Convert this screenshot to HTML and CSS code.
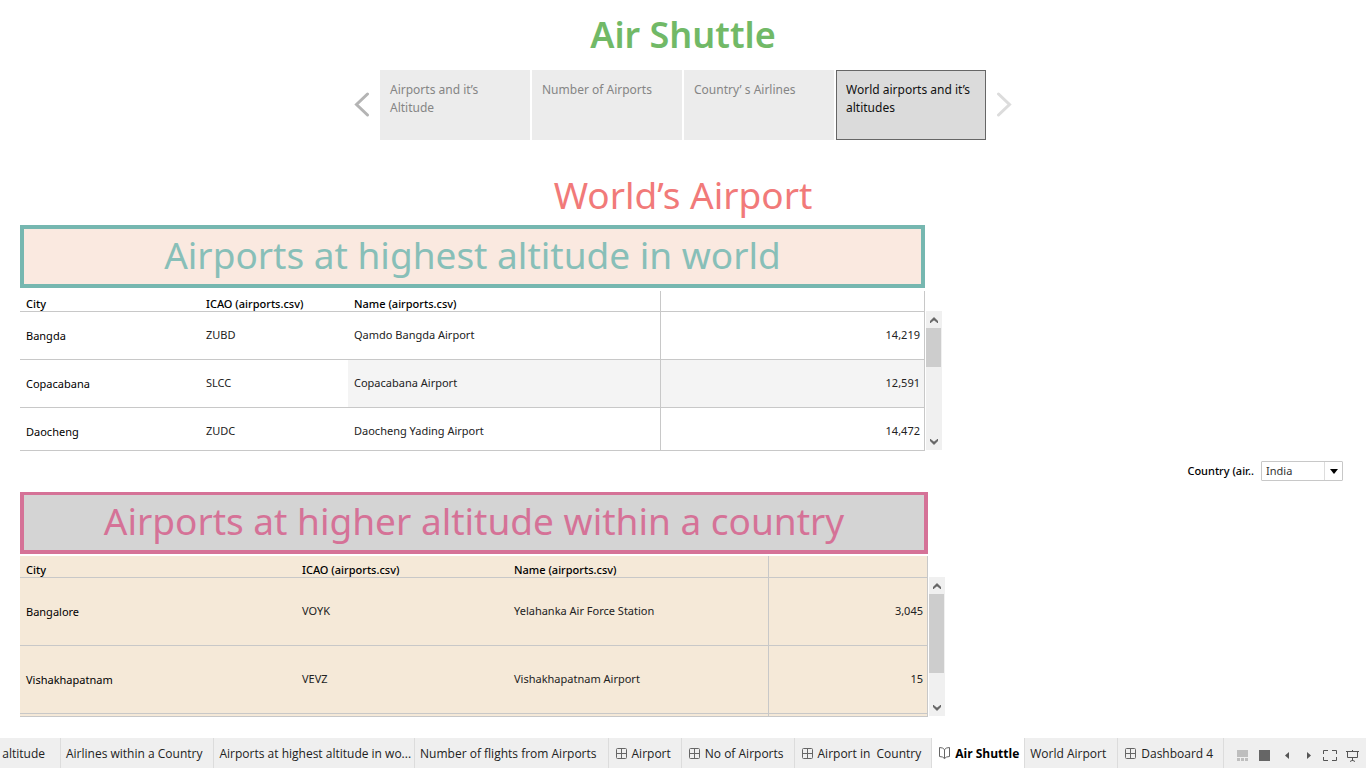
FILE: index.html
```html
<!DOCTYPE html>
<html lang="en">
<head>
<meta charset="utf-8">
<meta name="viewport" content="width=device-width, initial-scale=1">
<title>Air Shuttle</title>
<link rel="stylesheet" href="styles.css">
</head>
<body>
<svg class="defs" aria-hidden="true">
  <symbol id="grid" viewBox="0 0 11 11"><path d="M1.5.5h8a1 1 0 0 1 1 1v8a1 1 0 0 1-1 1h-8a1 1 0 0 1-1-1v-8a1 1 0 0 1 1-1zM5.5.5v10M.5 5.500h10" fill="none" stroke="#666"/></symbol>
  <symbol id="up" viewBox="0 0 8 6"><path d="M0 4.500 4 .500l4 4V6L4 2.800 0 6z" fill="#606060" stroke="#606060" stroke-width=".8"/></symbol>
  <symbol id="down" viewBox="0 0 8 6"><path d="M0 1.500 4 5.500l4-4V0L4 3.200 0 0z" fill="#606060" stroke="#606060" stroke-width=".8"/></symbol>
</svg>
<main class="story">
  <h1 class="story-title">Air Shuttle</h1>
  <nav class="points" aria-label="Story points">
    <button class="arrow" aria-label="Previous"><svg width="16" height="26" viewBox="0 0 16 26"><path d="M13.500 2 2.500 12.500l11 10.500" fill="none" stroke="#b4b4b4" stroke-width="3" stroke-linecap="round"/></svg></button>
    <div class="point-list">
      <button class="point">Airports and it’s Altitude</button>
      <button class="point">Number of Airports</button>
      <button class="point">Country’ s Airlines</button>
      <button class="point active">World airports and it’s altitudes</button>
    </div>
    <button class="arrow" aria-label="Next"><svg width="16" height="26" viewBox="0 0 16 26"><path d="M2.500 2l11 10.500L2.500 23" fill="none" stroke="#dcdcdc" stroke-width="3" stroke-linecap="round"/></svg></button>
  </nav>
  <h2 class="dash-title">World’s Airport</h2>
  <div class="dashboard">
    <div class="panels">
      <section class="panel world">
        <h3 class="panel-title">Airports at highest altitude in world</h3>
        <div class="sheet">
          <div class="view">
            <table>
              <colgroup><col class="city"><col class="icao"><col class="name"><col></colgroup>
              <thead><tr><th>City</th><th>ICAO (airports.csv)</th><th>Name (airports.csv)</th><td></td></tr></thead>
              <tbody>
                <tr><th>Bangda</th><td>ZUBD</td><td>Qamdo Bangda Airport</td><td>14,219</td></tr>
                <tr class="band"><th>Copacabana</th><td>SLCC</td><td>Copacabana Airport</td><td>12,591</td></tr>
                <tr><th>Daocheng</th><td>ZUDC</td><td>Daocheng Yading Airport</td><td>14,472</td></tr>
              </tbody>
            </table>
          </div>
          <div class="scrollbar">
            <button aria-label="Scroll up"><svg width="8" height="6"><use href="#up"/></svg></button>
            <div class="track"><div class="thumb"></div></div>
            <button aria-label="Scroll down"><svg width="8" height="6"><use href="#down"/></svg></button>
          </div>
        </div>
      </section>
      <section class="panel country">
        <h3 class="panel-title">Airports at higher altitude within a country</h3>
        <div class="sheet">
          <div class="view">
            <table>
              <colgroup><col class="city"><col class="icao"><col class="name"><col></colgroup>
              <thead><tr><th>City</th><th>ICAO (airports.csv)</th><th>Name (airports.csv)</th><td></td></tr></thead>
              <tbody>
                <tr><th>Bangalore</th><td>VOYK</td><td>Yelahanka Air Force Station</td><td>3,045</td></tr>
                <tr><th>Vishakhapatnam</th><td>VEVZ</td><td>Vishakhapatnam Airport</td><td>15</td></tr>
                <tr><th></th><td></td><td></td><td></td></tr>
              </tbody>
            </table>
          </div>
          <div class="scrollbar">
            <button aria-label="Scroll up"><svg width="8" height="6"><use href="#up"/></svg></button>
            <div class="track"><div class="thumb"></div></div>
            <button aria-label="Scroll down"><svg width="8" height="6"><use href="#down"/></svg></button>
          </div>
        </div>
      </section>
    </div>
    <aside class="filter">
      <label for="country">Country (air..</label>
      <div class="select-box">
        <select id="country"><option>India</option></select>
        <span class="caret"><svg width="8" height="5" viewBox="0 0 8 5"><path d="M0 0h8L4 5z"/></svg></span>
      </div>
    </aside>
  </div>
</main>
<footer class="tabbar">
  <nav class="tabs" aria-label="Sheets">
    <a class="tab first" href="#">t altitude</a>
    <a class="tab" href="#">Airlines within a Country</a>
    <a class="tab tight" href="#">Airports at highest altitude in wo...</a>
    <a class="tab" href="#">Number of flights from Airports</a>
    <a class="tab icon" href="#"><svg width="11" height="11"><use href="#grid"/></svg>Airport</a>
    <a class="tab icon" href="#"><svg width="11" height="11"><use href="#grid"/></svg>No of Airports</a>
    <a class="tab icon" href="#"><svg width="11" height="11"><use href="#grid"/></svg>Airport in&nbsp; Country</a>
    <a class="tab icon current" href="#"><svg width="11" height="12" viewBox="0 0 11 12"><path d="M5.500 2.500 3.500 1 .5.500v9l3 .5 2 1.500 2-1.500 3-.500v-9L7.500 1zM5.500 2.500v9" fill="none" stroke="#666"/></svg>Air Shuttle</a>
    <a class="tab" href="#">World Airport</a>
    <a class="tab icon" href="#"><svg width="11" height="11"><use href="#grid"/></svg>Dashboard 4</a>
  </nav>
  <div class="tools">
    <button aria-label="Show filmstrip"><svg width="11" height="11" viewBox="0 0 11 11"><path d="M0 0h11v7H0zM0 8h3v3H0zM4 8h3v3H4zM8 8h3v3H8z" fill="#bebebe"/></svg></button>
    <button aria-label="Show tabs"><svg width="11" height="11"><path d="M0 0h11v11H0z" fill="#666"/></svg></button>
    <button aria-label="Previous sheet"><svg width="5" height="7"><path d="M5 0v7L1 3.500z" fill="#555"/></svg></button>
    <button aria-label="Next sheet"><svg width="5" height="7"><path d="M1 0v7l4-3.500z" fill="#555"/></svg></button>
    <button aria-label="Full screen"><svg width="14" height="11" viewBox="0 0 14 11"><path d="M.5 4V.5H5M9 .5h4.500V4M13.500 7v3.500H9M5 10.500H.5V7" fill="none" stroke="#555"/></svg></button>
    <button aria-label="Presentation mode"><svg width="13" height="12" viewBox="0 0 13 12"><path d="M0 1.500h13M1.500 1.500v6h10v-6M6.500 0v1M6.500 7.500v3M4 11.500l2-1h1l2 1" fill="none" stroke="#555"/></svg></button>
  </div>
</footer>
</body>
</html>
```
FILE: styles.css
```css
* { box-sizing: border-box; }
body {
  margin: 0;
  min-height: 100vh;
  display: flex;
  flex-direction: column;
  background: #fff;
  color: #000;
  font-family: "Noto Sans", "Open Sans", sans-serif;
  font-size: 11px;
}
button, select { font: inherit; color: inherit; margin: 0; padding: 0; border: 0; background: none; }
.defs { position: absolute; width: 0; height: 0; }
h1, h2, h3 { margin: 0; text-align: center; font-size: 37px; line-height: 50px; font-weight: 400; }

.story { flex: 1; padding-top: 10px; }
.story-title { color: #71b967; font-size: 36px; font-weight: 600; }

.points { display: flex; justify-content: center; gap: 10px; margin-top: 10px; }
.point-list { display: flex; gap: 2px; }
.arrow { display: flex; align-items: center; }
.point {
  display: flex;
  width: 150px;
  height: 70px;
  padding: 11px 10px;
  background: #ececec;
  color: #858585;
  font-size: 12px;
  line-height: 18px;
  text-align: left;
}
.point.active { background: #dbdbdb; border: 1px solid #666; padding: 10px 9px; color: #111; }

.dash-title { margin-top: 30px; color: #f17a79; }

.dashboard { display: flex; padding: 5px 23px 0 20px; }
.panels { flex: 1; display: flex; flex-direction: column; gap: 41px; }
.panel-title { height: 63px; border: 4px solid; line-height: 52px; }
.world .panel-title { margin-right: 17px; background: #fae9e0; color: #88bfb8; border-color: #76b7b0; }
.country .panel-title { margin-right: 14px; background: #d4d4d4; color: #d57297; border-color: #d57297; height: 62px; border-top-width: 3px; }

.sheet { display: flex; gap: 1px; }
.world .sheet { margin-top: 3px; height: 160px; }
.country .sheet { margin: 2px -3px 0 0; height: 161px; }
.view { flex: 1; overflow: hidden; border-bottom: 1px solid #c8c8c8; }
.country .view { background: #f5e9d8; }
table { width: 100%; table-layout: fixed; border-collapse: separate; border-spacing: 0; line-height: 14px; }
th, td { padding: 0 6px 2px; border-bottom: 1px solid #c8c8c8; text-align: left; font-weight: 400; white-space: nowrap; }
tbody th { padding-bottom: 0; }
td { color: #222; }
td:last-child { border-left: 1px solid #c8c8c8; border-right: 1px solid #c8c8c8; padding-right: 4px; text-align: right; }
thead th { height: 21px; padding: 6px 6px 0; font-weight: 500; }
.country thead th { height: 22px; }
.world tbody tr { height: 48px; }
.country tbody tr { height: 68px; }
.world .city { width: 180px; }
.world .icao { width: 148px; }
.world .name { width: 312px; }
.country .city { width: 276px; }
.country .icao { width: 212px; }
.country .name { width: 260px; }
.band td:nth-child(n+3) { background: #f4f4f4; }

.scrollbar { width: 16px; margin: 20px 0 1px; background: #f0f0f0; display: flex; flex-direction: column; }
.country .scrollbar { margin-top: 21px; }
.scrollbar button { height: 17px; display: flex; align-items: center; justify-content: center; }
.track { flex: 1; }
.thumb { width: 15px; height: 39px; background: #cdcdcd; }
.country .thumb { height: 79px; }

.filter { width: 401px; display: flex; align-items: center; justify-content: flex-end; gap: 7px; }
.filter label { font-weight: 500; padding-bottom: 2px; }
.select-box { display: flex; position: relative; width: 82px; height: 20px; border: 1px solid #c8c8c8; border-radius: 1px; }
.select-box select { appearance: none; width: 100%; padding: 0 0 2px 4px; color: #333; }
.caret { position: absolute; right: 0; top: 0; bottom: 0; width: 18px; border-left: 1px solid #ddd; display: flex; align-items: center; justify-content: center; pointer-events: none; }

.tabbar { display: flex; height: 30px; background: #efefef; font-family: "Open Sans", "Noto Sans", sans-serif; font-size: 12px; }
.tabs { display: flex; flex: 1; min-width: 0; overflow: hidden; }
.tab { display: flex; align-items: center; flex: none; gap: 5px; padding: 0 11px 0 5px; border-right: 1px solid #dcdcdc; color: #222; text-decoration: none; white-space: nowrap; }
.tab.first { width: 61px; padding-right: 15px; justify-content: flex-end; }
.tab.tight { padding-right: 3px; }
.tab.icon { padding: 0 10px 0 7px; }
.tab.current { background: #fff; color: #000; font-weight: 700; padding-right: 5px; }
.tools { display: flex; align-items: center; gap: 8px; padding: 5px 7px 0 0; }
.tools button { display: flex; min-width: 14px; justify-content: center; }
```
